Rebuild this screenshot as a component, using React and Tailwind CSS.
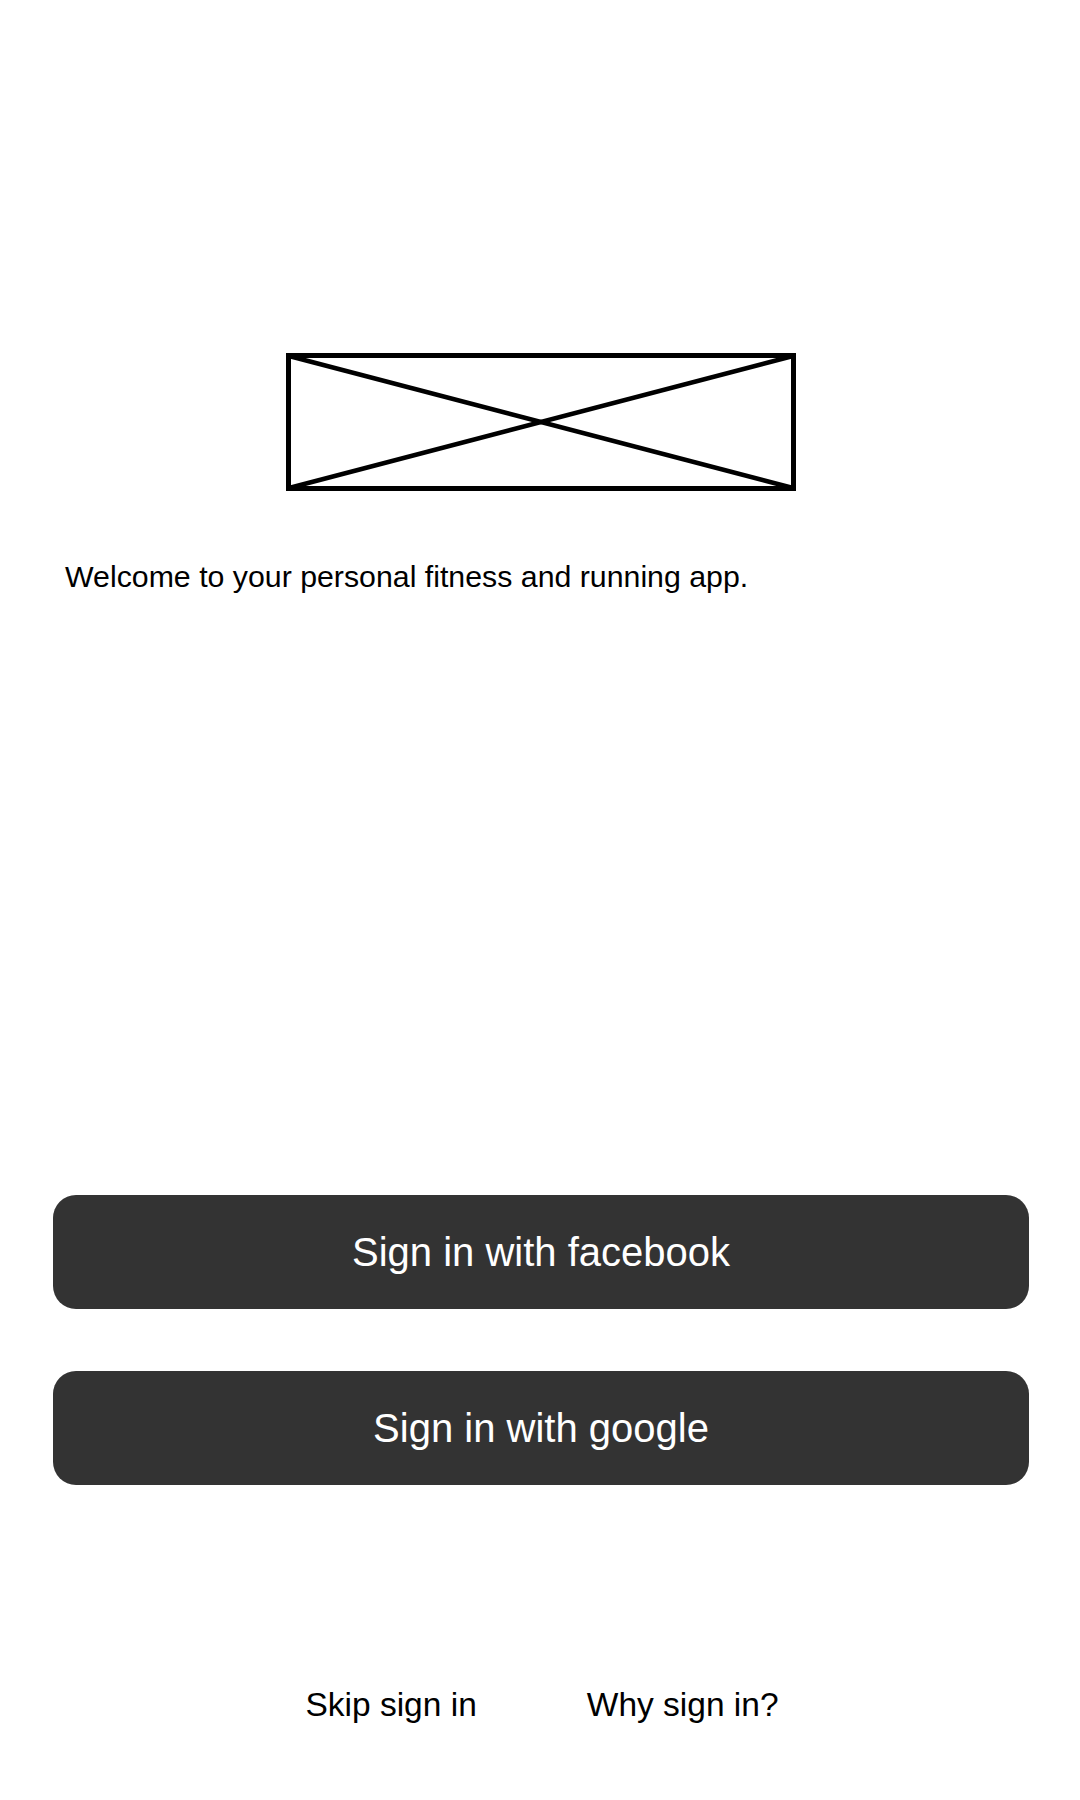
import React from 'react';

const font = { fontFamily: '"Liberation Sans", Arial, sans-serif' };

const Placeholder = () => (
  <svg width="510" height="138" viewBox="0 0 510 138" className="block">
    <rect x="2.5" y="2.5" width="505" height="133" fill="none" stroke="#000" strokeWidth="5" />
    <line x1="3" y1="3" x2="507" y2="135" stroke="#000" strokeWidth="4.5" />
    <line x1="3" y1="135" x2="507" y2="3" stroke="#000" strokeWidth="4.5" />
  </svg>
);

export default function App() {
  return (
    <div className="w-[1080px] h-[1800px] bg-white flex flex-col" style={font}>
      {/* Logo */}
      <div className="flex justify-center pt-[353px] pl-[2px]">
        <Placeholder />
      </div>

      {/* Welcome */}
      <p className="mt-[68px] pl-[65px] text-[30.3px] leading-[36px] text-black">
        Welcome to your personal fitness and running app.
      </p>

      {/* Sign in buttons */}
      <div className="mt-[600px] pl-[53px] pr-[51px] flex flex-col gap-[62px]">
        <button className="h-[114px] w-full rounded-[23px] bg-[#333333] text-white text-[40px]">
          Sign in with facebook
        </button>
        <button className="h-[114px] w-full rounded-[23px] bg-[#333333] text-white text-[40px]">
          Sign in with google
        </button>
      </div>

      {/* Footer links */}
      <div className="mt-[200px] flex justify-center gap-[110px] pl-[4px] text-[33.5px] leading-[40px] text-black">
        <span>Skip sign in</span>
        <span>Why sign in?</span>
      </div>
    </div>
  );
}
